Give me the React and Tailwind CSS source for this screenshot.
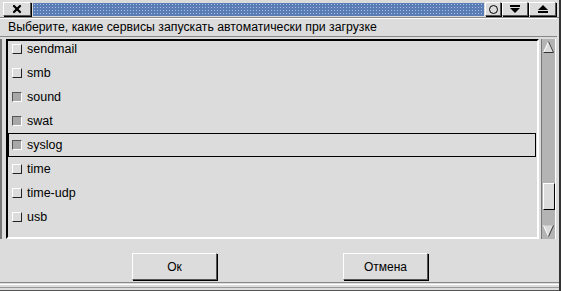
import { X } from 'lucide-react';

const services = [
  { name: 'sendmail', on: false },
  { name: 'smb', on: false },
  { name: 'sound', on: true },
  { name: 'swat', on: true },
  { name: 'syslog', on: true, focus: true },
  { name: 'time', on: false },
  { name: 'time-udp', on: false },
  { name: 'usb', on: false },
];

// raised bevel used by buttons and title widgets
const raised = 'border border-t-white border-l-white border-b-[#555] border-r-[#555] shadow-[1px_1px_0_#000]';

function Check({ on }) {
  return on ? (
    <span className="w-[10px] h-[10px] shrink-0 bg-[#a8a8a8] border border-t-[#555] border-l-[#555] border-b-white border-r-white" />
  ) : (
    <span className="w-[10px] h-[10px] shrink-0 bg-[#dcdcdc] border border-t-white border-l-white border-b-[#222] border-r-[#222]" />
  );
}

function TitleBar() {
  return (
    <div className="h-[18px] flex items-center gap-[1px] pl-[3px] pr-[3px] pt-[1px] border-b border-b-[#888]">
      <div className={`w-[28px] h-[14px] flex items-center justify-center bg-[#dcdcdc] ${raised}`}>
        <X size={12} strokeWidth={4.5} color="#000" />
      </div>
      <div className="flex-1 h-[13px] ml-[1px] bg-[#5a7db6] [background-image:radial-gradient(circle,#a9bfe2_0.7px,transparent_0.9px)] [background-size:3px_3px]" />
      <div className={`w-[16px] h-[14px] flex items-center justify-center bg-[#dcdcdc] ${raised}`}>
        <span className="w-[9px] h-[9px] rounded-full border border-black" />
      </div>
      <div className={`w-[26px] h-[14px] flex items-center justify-center bg-[#dcdcdc] ${raised}`}>
        <svg width="10" height="8" viewBox="0 0 10 8">
          <rect x="0" y="0" width="10" height="2" fill="#000" />
          <polygon points="0,3 10,3 5,8" fill="#000" />
        </svg>
      </div>
      <div className={`w-[27px] h-[14px] flex items-center justify-center bg-[#dcdcdc] ${raised}`}>
        <svg width="10" height="8" viewBox="0 0 10 8">
          <polygon points="5,0 10,5 0,5" fill="#000" />
          <rect x="0" y="6" width="10" height="2" fill="#000" />
        </svg>
      </div>
    </div>
  );
}

function Scrollbar() {
  return (
    <div className="w-[15px] ml-[2px] bg-[#b4b4b4] border-l border-l-[#777] border-r border-r-white flex flex-col items-center py-[1px]">
      <svg width="11" height="12" viewBox="0 0 11 12" className="mt-[1px]">
        <polygon points="5.5,0.5 10.5,11.5 0.5,11.5" fill="#dcdcdc" stroke="#fff" />
        <polyline points="5.5,0.5 10.5,11.5 0.5,11.5" fill="none" stroke="#333" />
      </svg>
      <div className="flex-1" />
      <div className="w-[12px] h-[27px] bg-[#dcdcdc] border border-t-white border-l-white border-b-black border-r-black" />
      <div className="h-[15px]" />
      <svg width="11" height="12" viewBox="0 0 11 12" className="mb-[1px]">
        <polygon points="0.5,0.5 10.5,0.5 5.5,11.5" fill="#dcdcdc" />
        <polyline points="0.5,0.5 5.5,11.5" fill="none" stroke="#fff" />
        <polyline points="10.5,0.5 5.5,11.5" fill="none" stroke="#333" />
      </svg>
    </div>
  );
}

export default function App() {
  return (
    <div
      className="w-[561px] h-[291px] bg-[#dcdcdc] flex flex-col overflow-hidden border-r-2 border-r-[#333] text-black"
      style={{ fontFamily: '"Liberation Sans", Arial, sans-serif' }}
    >
      <TitleBar />

      {/* prompt */}
      <div className="h-[19px] flex items-center pl-[8px] text-[12.3px] border-t border-t-white border-b border-b-[#888] mr-[2px]">
        Выберите, какие сервисы запускать автоматически при загрузке
      </div>

      {/* list + scrollbar */}
      <div className="flex h-[200px] mt-[2px] pl-[2px] pr-[3px] border-l-2 border-l-[#777]">
        <div className="flex-1 ml-[2px] overflow-hidden border-2 border-t-black border-l-black border-b-white border-r-white">
          <div className="-mt-[4px] flex flex-col">
            {services.map((s) => (
              <div
                key={s.name}
                className={`h-[24px] shrink-0 flex items-center gap-[5px] pl-[3px] mr-[1px] text-[12.5px] ${
                  s.focus ? 'border border-black' : 'border border-transparent'
                }`}
              >
                <Check on={s.on} />
                <span>{s.name}</span>
              </div>
            ))}
          </div>
        </div>
        <Scrollbar />
      </div>

      {/* buttons */}
      <div className="flex-1 flex items-start pt-[14px] pl-[132px] gap-[126px]">
        <button className={`w-[85px] h-[27px] bg-[#dcdcdc] text-[12px] ${raised}`}>Ок</button>
        <button className={`w-[85px] h-[27px] bg-[#dcdcdc] text-[12px] ${raised}`}>Отмена</button>
      </div>
      <div className="h-[9px] border-t border-t-[#888] bg-[#dcdcdc] flex flex-col">
        <div className="h-[1px] bg-white mt-[1px]" />
        <div className="h-[1px] bg-[#999] mt-[2px]" />
        <div className="h-[1px] bg-[#555] mt-[2px]" />
      </div>
    </div>
  );
}
